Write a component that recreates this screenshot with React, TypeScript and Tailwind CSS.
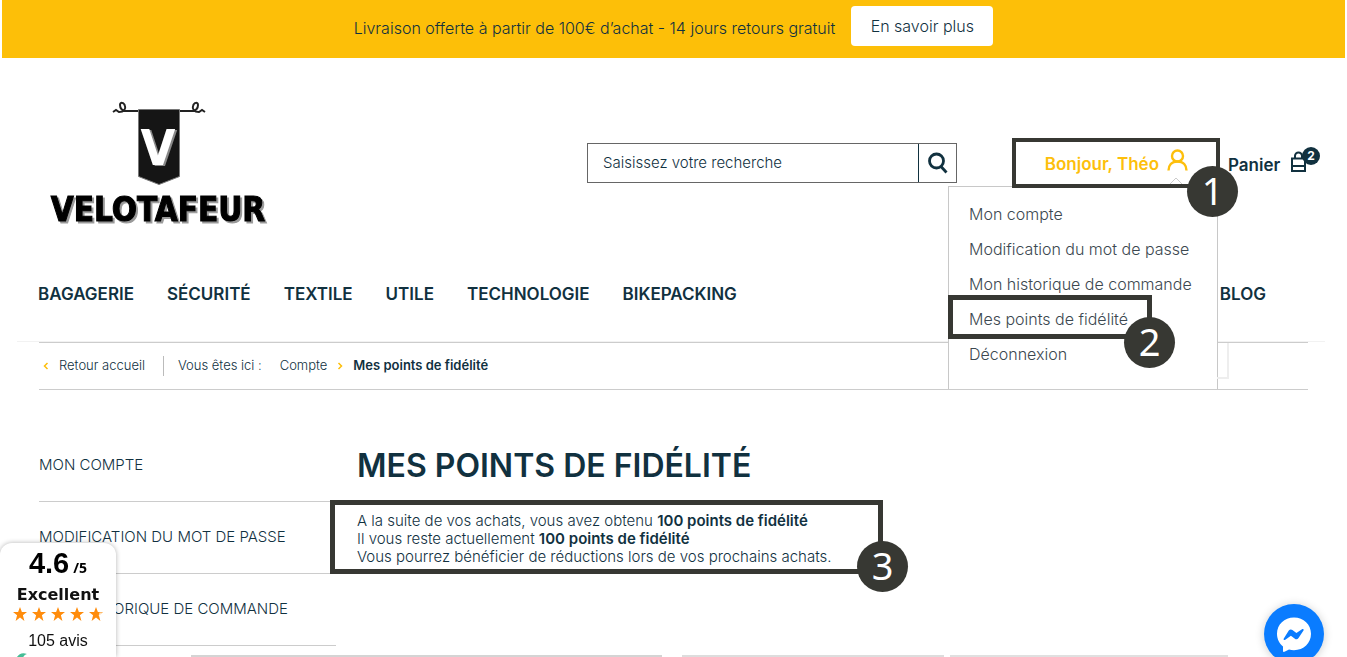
import { clsx } from "clsx";

const navItems = ["BAGAGERIE", "SÉCURITÉ", "TEXTILE", "UTILE", "TECHNOLOGIE", "BIKEPACKING"];

const menuItems = [
  "Mon compte",
  "Modification du mot de passe",
  "Mon historique de commande",
  "Mes points de fidélité",
  "Déconnexion",
];

const sideItems = ["MON COMPTE", "MODIFICATION DU MOT DE PASSE", "MON HISTORIQUE DE COMMANDE"];

// Dark frame with a numbered disc, drawn over the element it points at
const Callout = ({ step, frame, disc }: { step: number; frame: string; disc: string }) => (
  <span className={clsx("pointer-events-none absolute z-20 block border-[#373833]", frame)}>
    <span
      className={clsx(
        "absolute flex size-[51px] items-center justify-center rounded-full bg-[#373833] pb-1 font-['Noto_Sans',sans-serif] text-[38px] leading-none font-normal text-white",
        disc
      )}
    >
      {step}
    </span>
  </span>
);

const Logo = () => (
  <a href="#" aria-label="Velotafeur" className="ml-3 block shrink-0">
    <svg width="220" height="124" viewBox="0 0 220 124" fill="none" className="overflow-visible">
      <path
        d="M63 11l3-2 3 2c5 0 7-3 6-6-1-4-5-4-5-1 0 4 3 6 7 6h11"
        stroke="#222"
        strokeWidth="2"
      />
      <path
        d="M155 11l-3-2-3 2c-5 0-7-3-6-6 1-4 5-4 5-1 0 4-3 6-7 6h-11"
        stroke="#222"
        strokeWidth="2"
      />
      <path d="M88.500 8.500h41v67l-20.500 8-20.500-8z" fill="#151515" stroke="#777" strokeWidth="1" />
      <g fontFamily="'DejaVu Sans Condensed','DejaVu Sans',sans-serif" fontWeight="700" textAnchor="middle">
        <text x="108" y="64" fontSize="50" fill="#fff" className="drop-shadow-[2px_1px_0_#888]">
          V
        </text>
        <text
          x="108"
          y="120"
          fontSize="33"
          fill="#000"
          stroke="#000"
          strokeWidth="1"
          className="drop-shadow-[2px_2px_0_#999]"
        >
          VELOTAFEUR
        </text>
      </g>
    </svg>
  </a>
);

const Account = () => (
  <div className="relative ml-[55px] h-[50px] w-[208px] shrink-0">
    <button
      type="button"
      className="flex h-full w-full items-center justify-end gap-2 pr-8 text-[17px] font-semibold text-[#fdbf0c]"
    >
      <span className="pt-1">Bonjour, Théo</span>
      <svg width="21" height="22" viewBox="0 0 21 22" fill="none" stroke="currentColor" strokeWidth="2.400" className="mb-1.5">
        <circle cx="10.500" cy="7" r="5.500" />
        <path d="M1.500 21.500c0-5 3-9 9-9s9 4 9 9" />
      </svg>
    </button>

    <svg width="14" height="8" viewBox="0 0 14 8" className="absolute right-[37px] bottom-1 z-10" fill="#fff" stroke="#ccc">
      <path d="M1 8l6-6 6 6" />
    </svg>

    <div className="absolute top-12 right-0.5 z-10 h-[203px] w-[270px] border border-b-0 border-[#c8c8c8] bg-white pt-2.5">
      <ul>
        {menuItems.map((item) => (
          <li key={item} className="relative pl-5 text-base leading-[35px] font-light text-[#3c4850]">
            <a href="#">{item}</a>
            {item === "Mes points de fidélité" && (
              <Callout
                step={2}
                frame="-top-[7px] -left-px h-11 w-[204px] border-[5px]"
                disc="-right-7 -bottom-[34px]"
              />
            )}
          </li>
        ))}
      </ul>
      <div className="absolute top-[156px] left-full h-9 w-3 border-r-2 border-b-2 border-[#eee]" />
    </div>

    <Callout step={1} frame="inset-0 border-4" disc="-right-[22px] -bottom-[33px]" />
  </div>
);

const Cart = () => (
  <a href="#" className="ml-2 flex w-[93px] shrink-0 items-center justify-between text-[17px] font-semibold text-[#11313f]">
    <span className="pt-1.5">Panier</span>
    <span className="relative mr-3.5 -mt-1">
      <svg width="17" height="21" viewBox="0 0 17 21" fill="none" stroke="currentColor" strokeWidth="2">
        <path d="M2 7.500h13V20H2zM2 15h13M5 8V5a3.500 3.500 0 017 0v3" />
      </svg>
      <span className="absolute -top-1 left-3 flex size-[18px] items-center justify-center rounded-full bg-[#11313f] text-xs font-bold text-white">
        2
      </span>
    </span>
  </a>
);

const STAR = "M7 0l1.900 5H14l-4.100 3.200L11.400 14 7 10.500 2.600 14l1.500-5.800L0 5h5.100z";

const Rating = () => (
  <aside className="fixed bottom-0 left-0 z-30 flex h-[114px] w-[116px] flex-col items-center overflow-hidden rounded-t-xl bg-white font-['Liberation_Sans',Arial,sans-serif] text-[#111] shadow-[0_0_5px_rgba(0,0,0,0.3)]">
    <p className="pt-0.5 text-[29px] leading-9 font-bold text-black">
      4.6 <span className="-ml-1 font-['Open_Sans',sans-serif] text-sm">/5</span>
    </p>
    <p className="pt-0.5 font-['DejaVu_Sans',sans-serif] text-base leading-6 font-bold">Excellent</p>
    <div className="flex gap-[5px]">
      {[1, 2, 3, 4, 5].map((n) => (
        <svg key={n} width="14" height="14" viewBox="0 0 14 14" fill="#ff8c0c">
          <path d={STAR} />
          {n === 5 && <path d="M9.500 9l4-3.500h-3z" fill="#ffe4c0" />}
        </svg>
      ))}
    </div>
    <p className="pt-2 text-base leading-6">105 avis</p>
    <svg width="16" height="12" viewBox="0 0 16 12" className="absolute top-[110px] left-4">
      <path d="M0 6C2 1 6-1 11 1 8 2 7 4 7 6z" fill="#45bd96" />
    </svg>
  </aside>
);

const Messenger = () => (
  <button
    type="button"
    aria-label="Messenger"
    className="fixed right-[23px] -bottom-[7px] z-30 size-[60px] rounded-full bg-[#0a7cff] shadow-[0_1px_10px_rgba(0,0,0,0.2)]"
  >
    <svg width="60" height="60" viewBox="0 0 60 60">
      <path d="M30 13.500c9.700 0 17 7 17 16.300s-7.300 16.400-17 16.400c-1.800 0-3.500-.2-5-.7l-4.500 2.300c-.9.400-1.500 0-1.500-.8v-4.500c-3.700-3-6-7.500-6-12.700 0-9.300 7.300-16.300 17-16.300z" fill="#fff" />
      <path d="M19.800 34.500l5-8c.8-1.200 2.400-1.500 3.600-.6l4 3 5.600-3.700c1.200-.7 2.200.2 1.500 1.300l-5 7.600c-.8 1.300-2.400 1.600-3.600.7l-4-3-5.600 4c-1.200.8-2.200-.2-1.500-1.300z" fill="#0a7cff" />
    </svg>
  </button>
);

export default function App() {
  return (
    <div className="relative h-screen overflow-hidden bg-white font-[Inter,sans-serif] text-[#11313f]">
      <div className="mx-0.5 flex items-center justify-center gap-4 bg-[#fdbf08] pt-1.5 pb-3 text-base font-light">
        <p className="pt-1">Livraison offerte à partir de 100€ d’achat - 14 jours retours gratuit</p>
        <a href="#" className="flex h-10 w-[142px] items-center justify-center rounded-sm bg-white">
          En savoir plus
        </a>
      </div>

      <header className="flex items-center pt-[43px] pr-[26px] pl-[38px]">
        <Logo />
        <form className="ml-auto flex h-10 w-[370px] border border-[#666]" onSubmit={(e) => e.preventDefault()}>
          <input
            type="text"
            aria-label="Recherche"
            placeholder="Saisissez votre recherche"
            className="min-w-0 flex-1 pl-[15px] text-[15px] font-light outline-none placeholder:text-[#11313f]"
          />
          <button
            type="submit"
            aria-label="Rechercher"
            className="flex w-[38px] items-center justify-center border-l border-[#11313f]"
          >
            <svg width="20" height="22" viewBox="0 0 20 22" fill="none" stroke="currentColor" strokeWidth="2.800">
              <circle cx="8.500" cy="9" r="7" />
              <path d="M13 14.500l5.500 6" />
            </svg>
          </button>
        </form>
        <Account />
        <Cart />
      </header>

      <nav className="mr-[22px] ml-[17px] flex gap-[33px] border-b border-[#f2f2f2] pt-[57px] pr-[59px] pb-[35px] pl-[21px] text-[17px] leading-6 font-semibold">
        {navItems.map((item) => (
          <a key={item} href="#">
            {item}
          </a>
        ))}
        <a href="#" className="ml-auto">
          BLOG
        </a>
      </nav>

      <div className="mx-[39px] flex h-12 items-center border-y border-[#ccc] text-[13px] font-light">
        <svg width="6" height="8" viewBox="0 0 6 8" className="ml-1 fill-none stroke-[#fdbf0c] stroke-[1.5]">
          <path d="M4.500 1l-3 3 3 3" />
        </svg>
        <a href="#" className="ml-2.5 border-r border-[#bbb] pr-[18px]">
          Retour accueil
        </a>
        <span className="ml-3.5">Vous êtes ici :</span>
        <a href="#" className="ml-[18px]">
          Compte
        </a>
        <svg width="6" height="8" viewBox="0 0 6 8" className="mx-2.5 fill-none stroke-[#fdbf0c] stroke-[1.5]">
          <path d="M1.500 1l3 3-3 3" />
        </svg>
        <span className="font-semibold">Mes points de fidélité</span>
      </div>

      <main className="mx-[39px] flex gap-[21px] pt-10">
        <ul className="w-[297px] shrink-0 text-[15px] font-light">
          {sideItems.map((item) => (
            <li key={item} className="flex h-[72px] items-center border-b border-[#ccc]">
              <a href="#">{item}</a>
            </li>
          ))}
        </ul>
        <section className="flex-1">
          <h1 className="pb-[11px] text-[32px] leading-[71px] font-semibold">MES POINTS DE FIDÉLITÉ</h1>
          <p className="relative w-fit text-[15px] leading-[18px] font-light">
            A la suite de vos achats, vous avez obtenu <b className="font-semibold">100 points de fidélité</b>
            <br />
            Il vous reste actuellement <b className="font-semibold">100 points de fidélité</b>
            <br />
            Vous pourrez bénéficier de réductions lors de vos prochains achats.
            <Callout
              step={3}
              frame="-top-3 -left-[27px] -bottom-2 w-[553px] border-[5px]"
              disc="-right-[30px] -bottom-[23px]"
            />
          </p>
        </section>
      </main>

      {/* top edge of the product carousel */}
      <div className="fixed right-[119px] bottom-0 left-[191px] flex h-0.5">
        <div className="mr-5 w-[471px] bg-[#d4d4d4]" />
        <div className="mr-1.5 w-[262px] bg-[#ddd]" />
        <div className="flex-1 bg-[#e0e0e0]" />
      </div>

      <Rating />
      <Messenger />
    </div>
  );
}
